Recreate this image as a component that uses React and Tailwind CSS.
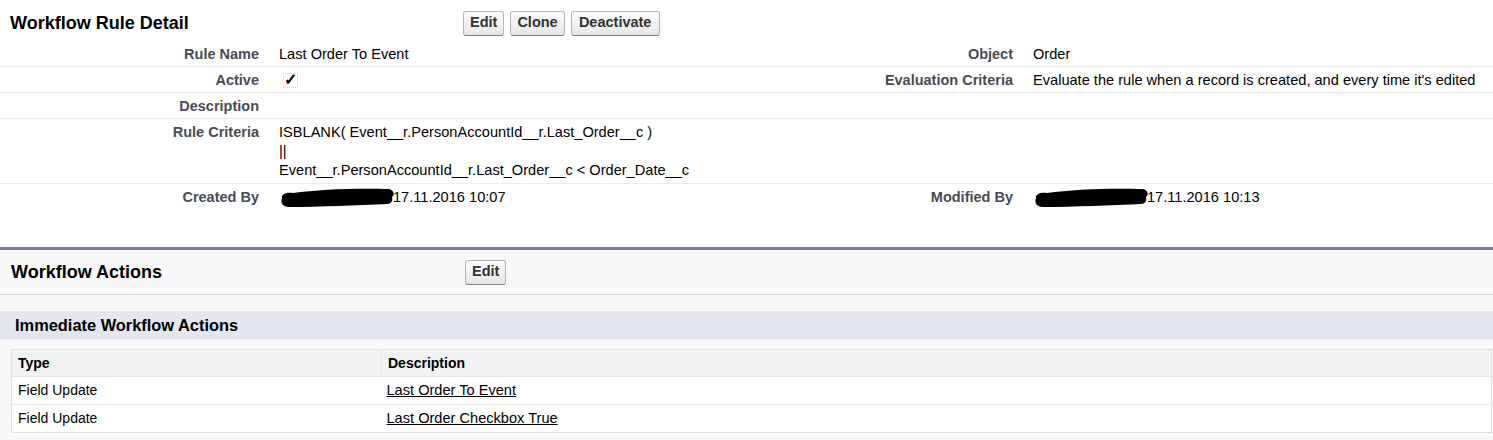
export default function App() {
  return (
    <div className="w-[1493px] h-[440px] overflow-hidden bg-white text-black" style={{ fontFamily: '"Liberation Sans", Arial, sans-serif' }}>
      <RuleDetail />
      <WorkflowActions />
    </div>
  );
}

function Btn({ children, className = '' }) {
  return (
    <button className={`h-[25px] px-[6px] rounded-[3px] border border-[#b5b5b5] border-b-[#7f7f7f] bg-gradient-to-b from-[#fdfdfd] to-[#e6e6e6] text-[14.5px] font-bold text-[#333] ${className}`}>
      {children}
    </button>
  );
}

// black marker scribble over the user name
function Redacted() {
  return (
    <svg width="116" height="22" viewBox="0 0 116 22" className="shrink-0 -my-[2px] -mr-[2px]">
      <path
        d="M3 12 C 2 8, 8 6, 14 7 C 40 3, 80 2, 110 3 C 115 4, 116 9, 113 11 C 114 15, 112 18, 108 18 C 80 19, 40 21, 10 21 C 4 21, 1 17, 3 12 Z"
        fill="#000"
      />
    </svg>
  );
}

function Row({ l1, v1, l2, v2, last }) {
  return (
    <div className={`grid grid-cols-[269px_477px_277px_1fr] ${last ? '' : 'border-b border-[#ececec]'}`}>
      <div className="pr-[10px] pt-[4px] pb-[3px] text-right text-[14.5px] font-bold text-[#4a4a56] leading-[18px]">{l1}</div>
      <div className="pl-[10px] pt-[4px] pb-[3px] text-[14.6px] leading-[18px]">{v1}</div>
      <div className="pr-[10px] pt-[4px] pb-[3px] text-right text-[14.5px] font-bold text-[#4a4a56] leading-[18px]">{l2}</div>
      <div className="pl-[10px] pt-[4px] pb-[3px] text-[14.6px] leading-[18px]">{v2}</div>
    </div>
  );
}

function RuleDetail() {
  return (
    <section className="h-[247px]">
      <div className="flex items-center h-[41px] pt-[5px]">
        <h2 className="w-[463px] pl-[10px] text-[18px] font-bold">Workflow Rule Detail</h2>
        <div className="flex gap-[6px]">
          <Btn>Edit</Btn>
          <Btn>Clone</Btn>
          <Btn className="w-[89px]">Deactivate</Btn>
        </div>
      </div>
      <Row l1="Rule Name" v1="Last Order To Event" l2="Object" v2="Order" />
      <Row
        l1="Active"
        v1={
          <div className="h-[18px] flex items-center">
            <span className="flex items-center justify-center w-[15px] h-[15px] ml-[4px] border border-dotted border-[#d0d0d0] text-[16px] font-bold leading-none">
              ✓
            </span>
          </div>
        }
        l2="Evaluation Criteria"
        v2="Evaluate the rule when a record is created, and every time it's edited"
      />
      <Row l1="Description" v1="" l2="" v2="" />
      <Row
        l1="Rule Criteria"
        v1={
          <div className="leading-[19px] h-[57px]">
            <div>ISBLANK( Event__r.PersonAccountId__r.Last_Order__c )</div>
            <div>||</div>
            <div>Event__r.PersonAccountId__r.Last_Order__c &lt; Order_Date__c</div>
          </div>
        }
        l2=""
        v2=""
      />
      <Row
        l1="Created By"
        v1={<span className="flex items-center h-[18px]"><Redacted />17.11.2016 10:07</span>}
        l2="Modified By"
        v2={<span className="flex items-center h-[18px]"><Redacted />17.11.2016 10:13</span>}
        last
      />
    </section>
  );
}

function WorkflowActions() {
  return (
    <section className="border-t-[3px] border-[#7a7e92] bg-[#f8f8f8] h-[193px]">
      <div className="flex items-center h-[45px] border-b border-[#dadada]">
        <h2 className="w-[465px] pl-[11px] text-[18px] font-bold">Workflow Actions</h2>
        <Btn>Edit</Btn>
      </div>
      <div className="mt-[16px] h-[28px] bg-[#e3e6ef] pl-[15px] flex items-center text-[16.4px] font-bold">
        Immediate Workflow Actions
      </div>
      <table className="mt-[10px] ml-[11px] w-[1481px] bg-white border border-[#e0e3e5] border-collapse text-[14px]">
        <thead>
          <tr className="bg-[#f2f3f3] h-[27px] border-b border-[#e0e3e5]">
            <th className="w-[370px] pl-[6px] text-left font-bold border-r border-[#e8e8e8]">Type</th>
            <th className="pl-[6px] text-left font-bold">Description</th>
          </tr>
        </thead>
        <tbody>
          {[
            ['Field Update', 'Last Order To Event'],
            ['Field Update', 'Last Order Checkbox True'],
          ].map(([type, desc], i) => (
            <tr key={i} className={`h-[28px] ${i === 0 ? 'border-b border-[#e8e8e8]' : ''}`}>
              <td className="pl-[6px]">{type}</td>
              <td className="pl-[5px]">
                <a href="#" className="underline text-black text-[14.6px]">{desc}</a>
              </td>
            </tr>
          ))}
        </tbody>
      </table>
    </section>
  );
}
